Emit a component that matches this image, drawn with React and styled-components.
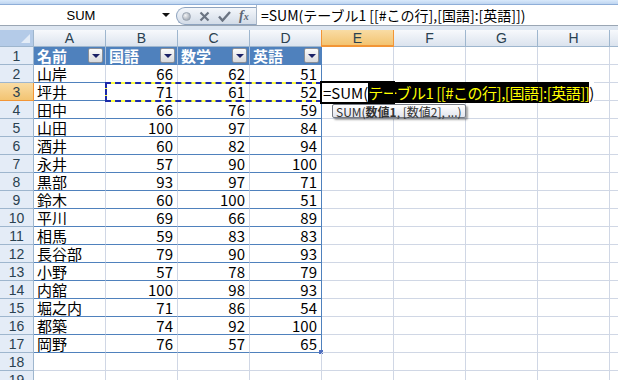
import React from "react";
import styled, { createGlobalStyle, css } from "styled-components";

const GlobalStyle = createGlobalStyle`
  * { box-sizing: border-box; }
  body {
    margin: 0;
    font-family: "Noto Sans CJK JP", "Noto Sans", sans-serif;
  }
`;

// last column only peeks in at the right edge, its label is out of view
const COLS = ["A", "B", "C", "D", "E", "F", "G", "H", ""];

const DATA = [
  ["名前", "国語", "数学", "英語"],
  ["山岸", 66, 62, 51],
  ["坪井", 71, 61, 52],
  ["田中", 66, 76, 59],
  ["山田", 100, 97, 84],
  ["酒井", 60, 82, 94],
  ["永井", 57, 90, 100],
  ["黒部", 93, 97, 71],
  ["鈴木", 60, 100, 51],
  ["平川", 69, 66, 89],
  ["相馬", 59, 83, 83],
  ["長谷部", 79, 90, 93],
  ["小野", 57, 78, 79],
  ["内舘", 100, 98, 93],
  ["堀之内", 71, 86, 54],
  ["都築", 74, 92, 100],
  ["岡野", 76, 57, 65],
  [],
  [],
];

const Window = styled.div`
  width: 618px;
  height: 380px;
  overflow: hidden;
  background: #fff;
  display: flex;
  flex-direction: column;
`;

const RibbonEdge = styled.div`
  height: 5px;
  flex: none;
  background: linear-gradient(#d9e9fb, #bfd5f0);
  border-bottom: 1px solid #8eaed8;
`;

const FormulaBar = styled.div`
  height: 21px;
  flex: none;
  display: flex;
  background: #fff;
  border-bottom: 1px solid #9aa6b4;
`;

const NameBox = styled.div`
  width: 176px;
  display: flex;
  align-items: center;
  font-size: 13px;
  color: #000;
`;

const NameText = styled.span`
  flex: 1;
  text-align: center;
  font-family: "Liberation Sans", sans-serif;
`;

const DropArrow = styled.span`
  width: 0;
  height: 0;
  margin-right: 6px;
  border-left: 4px solid transparent;
  border-right: 4px solid transparent;
  border-top: 4px solid #111;
`;

const FxPill = styled.div`
  width: 80px;
  height: 18px;
  margin-top: 2px;
  display: flex;
  align-items: center;
  gap: 8px;
  padding-left: 5px;
  border: 1px solid #8ea3bf;
  border-right: none;
  border-radius: 9px 0 0 9px;
  background: linear-gradient(#f4f7fb, #d3dce8);
`;

const Dot = styled.span`
  width: 9px;
  height: 9px;
  border-radius: 50%;
  background: radial-gradient(circle at 35% 35%, #f2f3f5, #8c96a3);
  border: 1px solid #9ba5b2;
`;

const Fx = styled.span`
  font-family: "Liberation Serif", serif;
  font-style: italic;
  font-weight: bold;
  font-size: 14px;
  color: #5d6674;
  line-height: 1;
  sub {
    font-size: 10px;
    vertical-align: baseline;
  }
`;

const FormulaInput = styled.div`
  flex: 1;
  border-left: 1px solid #a8b6c7;
  padding-left: 4px;
  font-size: 14px;
  line-height: 21px;
  white-space: nowrap;
  color: #000;
`;

const GapStrip = styled.div`
  height: 4px;
  flex: none;
  background: #dde6f1;
`;

const Sheet = styled.div`
  position: relative;
  flex: 1;
`;

const Grid = styled.div`
  display: grid;
  grid-template-columns: 34px repeat(9, 72px);
  grid-template-rows: 17px;
  grid-auto-rows: 18px;
`;

const headBase = css`
  display: flex;
  align-items: center;
  justify-content: center;
  font-family: "Liberation Sans", sans-serif;
  font-size: 14px;
  color: #2a4150;
`;

const Corner = styled.div`
  position: relative;
  background: #b4cbe8;
  border-right: 1px solid #9eb6ce;
  border-bottom: 1px solid #9eb6ce;
  &::after {
    content: "";
    position: absolute;
    right: 3px;
    bottom: 3px;
    border-left: 9px solid transparent;
    border-bottom: 9px solid #e3ecf7;
  }
`;

const ColHead = styled.div`
  ${headBase};
  background: ${(p) =>
    p.$active
      ? "linear-gradient(#f9dca4, #f3c472)"
      : "linear-gradient(#f7f9fc, #dbe3ee)"};
  border-right: 1px solid ${(p) => (p.$active ? "#f29536" : "#9eb6ce")};
  border-bottom: ${(p) => (p.$active ? "2px solid #f29536" : "1px solid #9eb6ce")};
  ${(p) => p.$active && "border-left: 1px solid #f29536; margin-left: -1px;"}
`;

const RowHead = styled.div`
  ${headBase};
  background: ${(p) =>
    p.$active ? "linear-gradient(#f9dca4, #f3c472)" : "#e4ecf7"};
  border-right: 1px solid ${(p) => (p.$active ? "#f29536" : "#9eb6ce")};
  border-bottom: 1px solid ${(p) => (p.$active ? "#f29536" : "#9eb6ce")};
`;

const Cell = styled.div`
  position: relative;
  display: flex;
  align-items: center;
  justify-content: ${(p) => (p.$num ? "flex-end" : "flex-start")};
  padding: 0 4px 0 3px;
  font-size: 15px;
  line-height: 18px;
  color: #000;
  white-space: nowrap;
  border-right: 1px solid ${(p) => (p.$edge ? "#4f81bd" : "#d0d7e5")};
  border-bottom: 1px solid ${(p) => (p.$table ? "#4f81bd" : "#d0d7e5")};
  ${(p) =>
    p.$header &&
    css`
      background: #4f81bd;
      color: #fff;
      font-weight: bold;
      justify-content: space-between;
      padding-right: 2px;
      border-right-color: ${p.$edge ? "#4f81bd" : "#a9c0de"};
    `}
  ${(p) =>
    p.$handle &&
    css`
      &::after {
        content: "";
        position: absolute;
        right: -2px;
        bottom: -2px;
        width: 4px;
        height: 4px;
        background: #4f6fc0;
      }
    `}
`;

const FilterButton = styled.span`
  width: 15px;
  height: 15px;
  display: flex;
  align-items: center;
  justify-content: center;
  border: 1px solid #8a8f98;
  border-radius: 2px;
  background: linear-gradient(#fbfbfb, #d8dadd);
  &::after {
    content: "";
    border-left: 4px solid transparent;
    border-right: 4px solid transparent;
    border-top: 4px solid #1a2166;
  }
`;

const Ants = styled.div`
  position: absolute;
  left: 105px;
  top: 52px;
  width: 217px;
  height: 20px;
  border: 2px solid #ffff40;
  &::after {
    content: "";
    position: absolute;
    inset: -2px;
    border: 2px dashed #1c2aa8;
  }
`;

const EditText = styled.div`
  position: absolute;
  left: 322px;
  top: 52px;
  height: 21px;
  padding-left: 1px;
  background: #fff;
  font-size: 15px;
  line-height: 21px;
  white-space: nowrap;
  color: #000;
`;

const Highlight = styled.span`
  display: inline-block;
  background: #000;
  color: #ffff00;
  letter-spacing: -0.5px;
`;

const ActiveFrame = styled.div`
  position: absolute;
  left: 320px;
  top: 51px;
  width: 75px;
  height: 23px;
  border: 2px solid #000;
`;

const Tooltip = styled.div`
  position: absolute;
  left: 332px;
  top: 74px;
  height: 14px;
  padding: 0 3px;
  font-size: 12px;
  line-height: 13px;
  white-space: nowrap;
  color: #333;
  border: 1px solid #767b85;
  border-radius: 2px;
  background: linear-gradient(#ffffff, #e3e5ee);
  box-shadow: 2px 2px 2px rgba(0, 0, 0, 0.35);
  b {
    font-weight: bold;
  }
`;

function CancelIcon() {
  return (
    <svg width="11" height="11" viewBox="0 0 11 11">
      <path d="M1.5 1.5 L9.5 9.5 M9.5 1.5 L1.5 9.5" stroke="#6b7482" strokeWidth="2.2" />
    </svg>
  );
}

function CheckIcon() {
  return (
    <svg width="13" height="11" viewBox="0 0 13 11">
      <polyline points="1,5.5 4.5,9.5 12,1" fill="none" stroke="#6b7482" strokeWidth="2.4" />
    </svg>
  );
}

export default function App() {
  return (
    <Window>
      <GlobalStyle />
      <RibbonEdge />
      <FormulaBar>
        <NameBox>
          <NameText>SUM</NameText>
          <DropArrow />
        </NameBox>
        <FxPill>
          <Dot />
          <CancelIcon />
          <CheckIcon />
          <Fx>
            f<sub>x</sub>
          </Fx>
        </FxPill>
        <FormulaInput>=SUM(テーブル1 [[#この行],[国語]:[英語]])</FormulaInput>
      </FormulaBar>
      <GapStrip />
      <Sheet>
        <Grid>
          <Corner />
          {COLS.map((c, ci) => (
            <ColHead key={ci} $active={c === "E"}>
              {c}
            </ColHead>
          ))}
          {DATA.map((row, r) => (
            <React.Fragment key={r}>
              <RowHead $active={r === 2}>{r + 1}</RowHead>
              {COLS.map((c, ci) => {
                const inTable = r < 17 && ci < 4;
                const value = row[ci];
                return (
                  <Cell
                    key={ci}
                    $num={typeof value === "number"}
                    $table={inTable}
                    $edge={r < 17 && ci === 3}
                    $header={r === 0 && ci < 4}
                    $handle={r === 16 && ci === 3}
                  >
                    {r === 0 && ci < 4 ? (
                      <>
                        <span>{value}</span>
                        <FilterButton />
                      </>
                    ) : (
                      value
                    )}
                  </Cell>
                );
              })}
            </React.Fragment>
          ))}
        </Grid>
        <Ants />
        <EditText>
          =SUM(<Highlight>テーブル1 [[#この行],[国語]:[英語]]</Highlight>)
        </EditText>
        <ActiveFrame />
        <Tooltip>
          SUM(<b>数値1</b>, [数値2], ...)
        </Tooltip>
      </Sheet>
    </Window>
  );
}
